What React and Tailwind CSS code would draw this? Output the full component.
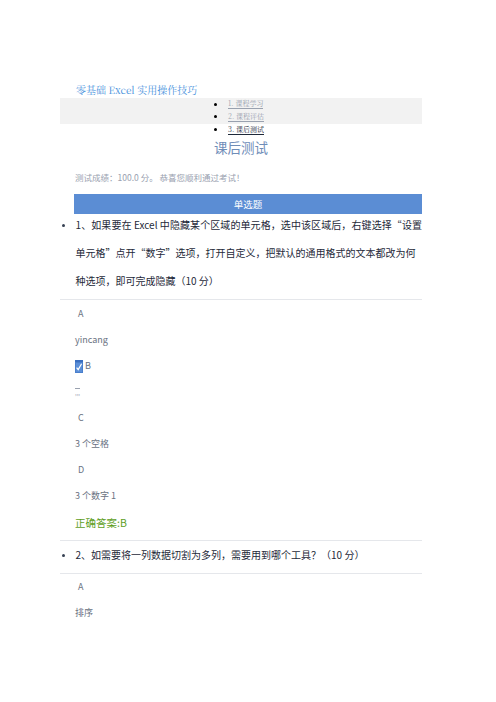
const sans = { fontFamily: '"Microsoft YaHei", "Noto Sans CJK SC", "Noto Sans", sans-serif' };

function NavItem({ label, active }) {
  return (
    <li className="flex h-[12.5px] items-center">
      <span className="ml-[154px] h-[3px] w-[3px] rounded-full bg-black" />
      <span
        className={`ml-[11px] border-b text-[7px] leading-[9px] ${active ? "border-gray-800 text-gray-800" : "border-gray-400 text-gray-400"}`}
        style={{ fontFamily: '"Noto Serif CJK SC", "Noto Sans CJK SC", serif' }}
      >
        {label}
      </span>
    </li>
  );
}

function CheckBox() {
  return (
    <svg viewBox="0 0 8 13" className="mr-[2px] -ml-[3px] h-[13px] w-[8px]" aria-hidden="true">
      <rect x="0" y="0" width="8" height="13" fill="#5b8fd8" />
      <rect x="0" y="0" width="8" height="2" fill="#3b6fc0" />
      <rect x="0.5" y="2.5" width="7" height="10" fill="none" stroke="#4a7fcc" strokeWidth="1" />
      <path d="M1.6 7.6 3.2 9.6 6.6 3.8" fill="none" stroke="#ffffff" strokeWidth="1.2" />
    </svg>
  );
}

function Option({ letter, checked }) {
  return (
    <div className="flex h-[26px] items-center pl-[18px] text-[9px] text-gray-500">
      {checked ? <CheckBox /> : null}
      {letter}
    </div>
  );
}

function Answer({ text }) {
  return <div className="flex h-[26px] items-center pl-[15px] text-[9px] text-gray-500">{text}</div>;
}

function Question({ lines }) {
  return (
    <div className="flex border-b border-gray-200">
      <span className="mt-[13px] ml-[2px] h-[2.5px] w-[2.5px] shrink-0 rounded-full bg-gray-700" />
      <div className="ml-[11px] flex-1 pb-[4px] text-[10px] leading-[28px] text-gray-800">
        {lines.map((line, i) => (
          <p key={i} className={lines.length > 1 && i === 0 ? "text-justify [text-align-last:justify]" : ""}>
            {line}
          </p>
        ))}
      </div>
    </div>
  );
}

export default function App() {
  return (
    <div className="min-h-[702px] bg-white pt-[83px]" style={sans}>
      <div className="ml-[60px] w-[362px]">
        <div
          className="pl-[16px] text-[10px] leading-[14px] text-[#4a93dd]"
          style={{ fontFamily: '"Noto Serif CJK SC", "Liberation Serif", serif' }}
        >
          零基础 Excel 实用操作技巧
        </div>
        <ul className="mt-[1px]">
          <div className="bg-[#f2f2f2] pb-[0.5px]">
            <NavItem label="1. 课程学习" />
            <NavItem label="2. 课程评估" />
          </div>
          <NavItem label="3. 课后测试" active />
        </ul>
        <h1 className="mt-[1px] text-center text-[13.5px] leading-[20px] text-[#6f8db8]">课后测试</h1>
        <p className="mt-[14px] pl-[15px] text-[8.5px] leading-[13px] text-gray-400">测试成绩：100.0 分。 恭喜您顺利通过考试！</p>
        <div className="mt-[10px] ml-[14px] flex h-[20px] items-center justify-center bg-[#5b8dd4] text-[9.5px] text-white">单选题</div>

        <div className="mt-[-3px]">
          <Question
            lines={[
              "1、如果要在 Excel 中隐藏某个区域的单元格，选中该区域后，右键选择“设置",
              "单元格”点开“数字”选项，打开自定义，把默认的通用格式的文本都改为何",
              "种选项，即可完成隐藏（10 分）",
            ]}
          />
          <div className="pt-[1px]">
            <Option letter="A" />
            <Answer text="yincang" />
            <Option letter="B" checked />
            <div className="flex h-[26px] items-center pl-[15px] text-[6px] leading-[6px] text-gray-400">
              <span className="border-t border-gray-400 pt-[1px]">,,,</span>
            </div>
            <Option letter="C" />
            <Answer text="3 个空格" />
            <Option letter="D" />
            <Answer text="3 个数字 1" />
            <div className="flex h-[28px] items-center pl-[15px] text-[10.5px] text-[#5e9e1e]">正确答案:B</div>
          </div>
          <div className="mt-[3px] border-t border-gray-200" />
          <Question lines={["2、如需要将一列数据切割为多列，需要用到哪个工具？（10 分）"]} />
          <div>
            <Option letter="A" />
            <Answer text="排序" />
          </div>
        </div>
      </div>
    </div>
  );
}
